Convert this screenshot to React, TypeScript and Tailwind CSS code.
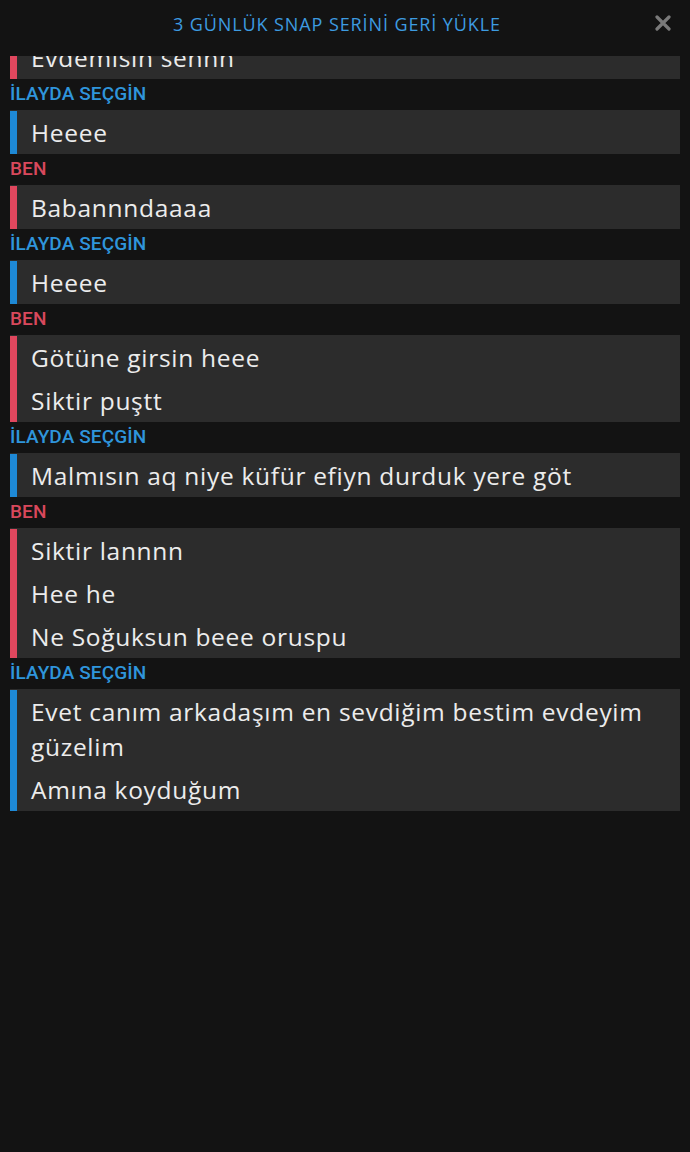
import React from "react";

type Group = { who: "ben" | "ilayda"; msgs: string[] };

const groups: Group[] = [
  { who: "ben", msgs: ["Evdemisin sennn"] },
  { who: "ilayda", msgs: ["Heeee"] },
  { who: "ben", msgs: ["Babannndaaaa"] },
  { who: "ilayda", msgs: ["Heeee"] },
  { who: "ben", msgs: ["Götüne girsin heee", "Siktir puştt"] },
  { who: "ilayda", msgs: ["Malmısın aq niye küfür efiyn durduk yere göt"] },
  { who: "ben", msgs: ["Siktir lannnn", "Hee he", "Ne Soğuksun beee oruspu"] },
  {
    who: "ilayda",
    msgs: ["Evet canım arkadaşım en sevdiğim bestim evdeyim güzelim", "Amına koyduğum"],
  },
];

export default function App() {
  return (
    <div
      className="w-[690px] h-[1152px] bg-[#131313] overflow-hidden flex flex-col"
      style={{ fontFamily: "'Open Sans', 'Noto Sans', sans-serif" }}
    >
      <div className="h-[56px] shrink-0 relative bg-[#131313] z-10">
        <div className="h-[48px] flex items-center justify-center pr-[16px]">
          <span className="text-[18px] tracking-[0.9px] text-[#3d9be0]">
            3 GÜNLÜK SNAP SERİNİ GERİ YÜKLE
          </span>
        </div>
        <svg
          className="absolute right-[19px] top-[15px]"
          width="16"
          height="16"
          viewBox="0 0 16 16"
        >
          <path d="M2 2 L14 14 M14 2 L2 14" stroke="#7a7a7a" strokeWidth="3.2" strokeLinecap="round" />
        </svg>
      </div>
      <div className="flex flex-col px-[10px] -mt-[21px]">
        {groups.map((g, i) => {
          const red = g.who === "ben";
          return (
            <div key={i} className="flex flex-col">
              {i > 0 && (
                <div
                  className={`h-[31px] flex items-center text-[19px] font-medium tracking-[0.1px] ${
                    red ? "text-[#d9485c]" : "text-[#2f95db]"
                  }`}
                  style={{ fontFamily: "Roboto, 'Liberation Sans', sans-serif" }}
                >
                  {red ? "BEN" : "İLAYDA SEÇGİN"}
                </div>
              )}
              <div className="flex bg-[#2c2c2c] py-[0.5px]">
                <div className={`w-[7px] shrink-0 ${red ? "bg-[#e0475e]" : "bg-[#1e89d6]"}`} />
                <div className="flex flex-col flex-1 pl-[14px] pr-[10px]">
                  {g.msgs.map((m, j) => (
                    <div
                      key={j}
                      className="py-[4px] text-[24.5px] leading-[35px] tracking-[0.7px] text-[#ececec]"
                    >
                      {m}
                    </div>
                  ))}
                </div>
              </div>
            </div>
          );
        })}
      </div>
    </div>
  );
}
